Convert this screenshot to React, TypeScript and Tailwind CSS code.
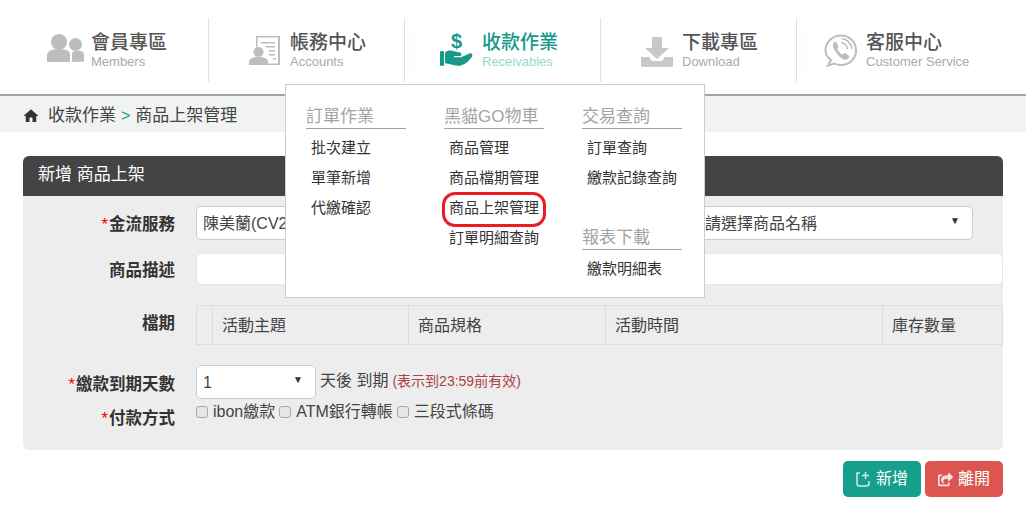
import { FaShareSquare } from "react-icons/fa";
import { MdHome } from "react-icons/md";

const cjk = "font-['Liberation_Sans','Noto_Sans_CJK_TC',sans-serif]";

const MembersIcon = () => (
  <svg width="37" height="30" viewBox="0 0 37 30" fill="#bdbdbd">
    <circle cx="12" cy="9" r="8" />
    <path d="M0 29v-6c0-4 3-6 7-6.500h10c4 .5 5.500 2 6 4v8.500z" />
    <circle cx="28.500" cy="11.500" r="6.500" />
    <path d="M25 29v-9c1-1.500 2-2 4-2h4c2.500 0 4 1.500 4 4v6.500z" />
  </svg>
);

const AccountsIcon = () => (
  <svg width="32" height="31" viewBox="0 0 32 31" fill="#bdbdbd">
    <path d="M7 1h24v29H14v-1.500h15V2.500H8.500V12H7z" />
    <path d="M12 7h14v1.500H12zM17 11h9v1.500h-9zM20 15h6v1.500h-6zM20 19h6v1.500h-6zM24 23h3v1.500h-3z" />
    <circle cx="9.500" cy="17" r="5" />
    <path d="M0 30v-3c0-3 3-4 6-5h7c3 1 6 2 6 5v3z" />
  </svg>
);

const ReceivablesIcon = () => (
  <svg width="33" height="17" viewBox="0 2 33 14" fill="#159a8a" preserveAspectRatio="none">
    <path d="M0 3h4v12H0z" />
    <path d="M5 4c3-2 6-2 9-1l6 1c2 .5 2 3-.5 3H14v1h7l8-3c3-1 4 1 3 2.500C29 11 24 15 18 15c-5 0-9-2-13-2z" />
  </svg>
);

const DownloadIcon = () => (
  <svg width="32" height="32" viewBox="0 0 32 32" fill="#c8c8c8">
    <path d="M11 1h10v11h7L16 23 4 12h7z" />
    <path d="M0 21h8l3 4h10l3-4h8v8c0 1.500-1 2-2 2H2c-1 0-2-.5-2-2z" />
  </svg>
);

// bubble with handset and two sound arcs
const ServiceIcon = () => (
  <svg width="33" height="33" viewBox="0 0 33 33" fill="none" stroke="#bdbdbd">
    <path strokeWidth="2" d="M4 31.500l3-5.500C3.500 23.500 1.500 20 1.500 16.500 1.500 8 8.500 1.500 17 1.500S32 8 32 16.500 25 31 17 31c-2.500 0-5-.5-6.500-1.500z" />
    <path fill="#bdbdbd" stroke="none" d="M9.500 9c1-1.500 2.500-1.500 3-.5l2 4c.3.800-.2 1.300-1.200 2.300-.5.500 3.700 6 5.200 5.700 1-.8 1.800-1.800 2.600-1.500l3.600 2.500c1 .8.200 2.500-1.200 3.500-2 1.500-5.500.5-9-3.500S7.500 12 9.500 9z" />
    <path strokeWidth="1.500" d="M17 8.500c3.500.5 6 3 6.500 6.500M17.500 4.500c5.500.5 10 5 10.500 10.500" />
  </svg>
);

const NewIcon = () => (
  <svg width="15" height="16" viewBox="0 0 15 16" fill="none" stroke="#ffffff" strokeWidth="1.500" className="opacity-80">
    <path d="M4 2H1v10.500C1 14 2 15 3.500 15h7c1.500 0 2.500-1 2.500-2.500V10" />
    <path d="M9.500 1v7M6 4.500h7" />
  </svg>
);

const navItems = [
  { title: "會員專區", sub: "Members", icon: <MembersIcon />, pad: "pl-[34px]", gap: "gap-[7px]", top: "pt-[15px]" },
  { title: "帳務中心", sub: "Accounts", icon: <AccountsIcon />, pad: "pl-[40px]", gap: "gap-[9px]", top: "pt-[17px]" },
  { title: "收款作業", sub: "Receivables", pad: "pl-[35px]", gap: "gap-[9px]", top: "pt-[13px]", active: true,
    icon: (
      <div className="flex flex-col items-center">
        <span className="-mb-px font-['Liberation_Sans',sans-serif] text-[20px] leading-[20px] font-bold text-[#159a8a]">$</span>
        <ReceivablesIcon />
      </div>
    ) },
  { title: "下載專區", sub: "Download", icon: <DownloadIcon />, pad: "pl-[40px]", gap: "gap-[9px]", top: "pt-[18px]" },
  { title: "客服中心", sub: "Customer Service", icon: <ServiceIcon />, pad: "pl-[27px]", gap: "gap-[9px]", top: "pt-[16px]" },
];

const menuCols = [
  { w: "w-[138px]", groups: [{ title: "訂單作業", items: ["批次建立", "單筆新增", "代繳確認"] }] },
  { w: "w-[138px]", groups: [{ title: "黑貓GO物車", items: ["商品管理", "商品檔期管理", "商品上架管理", "訂單明細查詢"] }] },
  { w: "w-[100px]", groups: [
    { title: "交易查詢", items: ["訂單查詢", "繳款記錄查詢"] },
    { title: "報表下載", items: ["繳款明細表"] },
  ] },
];

const Caret = () => <span className="absolute right-[12px] top-[9px] text-[10px] leading-[10px] text-[#333]">▼</span>;

const Label = ({ text, req, cls }: { text: string; req?: boolean; cls?: string }) => (
  <div className={`w-[152px] text-right text-[16.500px] font-bold text-[#333] ${cls ?? ""}`}>
    {req && <span className="mr-[1px] font-normal text-[#ee0000]">*</span>}
    {text}
  </div>
);

const selectBox = "relative h-[34px] rounded-[5px] border border-[#cccccc] bg-white px-[6px] text-[16px] leading-[33px] text-[#444]";

export default function App() {
  return (
    <div className={`relative h-[507px] w-[1026px] overflow-hidden bg-white ${cjk}`}>
      {/* top nav */}
      <div className="flex h-[94px] items-start pl-[13px] pt-[18px]">
        {navItems.map((n, i) => (
          <div key={n.sub} className="flex h-[64px]">
            <div className={`flex h-full w-[195px] items-start ${n.pad} ${n.gap}`}>
              <div className={n.top}>{n.icon}</div>
              <div className="pt-[13px]">
                <div className={`text-[19px] leading-[24px] font-medium ${n.active ? "text-[#159a8a]" : "text-[#555]"}`}>{n.title}</div>
                <div className={`text-[13px] leading-[13px] ${n.active ? "text-[#8fdccb]" : "text-[#aaa]"}`}>{n.sub}</div>
              </div>
            </div>
            {i < 4 && <div className="h-full w-px bg-[#e0e0e0] shadow-[5px_0_7px_0_rgba(0,0,0,0.07)]" />}
          </div>
        ))}
      </div>

      {/* breadcrumb */}
      <div className="flex h-[38px] items-center border-t-2 border-[#a3a3a3] bg-[#f1f3f3] pl-[22px] pt-[3px] text-[17px] text-[#444]">
        <MdHome size={18} color="#333" className="mr-[8px]" />
        <span>收款作業</span>
        <span className="mx-[5px] text-[16px] text-[#159a8a]">&gt;</span>
        <span>商品上架管理</span>
      </div>

      {/* panel */}
      <div className="mx-[23px] mt-[24px] h-[294px] rounded-[6px] bg-[#ededed]">
        <div className="h-[40px] rounded-t-[6px] bg-[#444444] pl-[15px] text-[17px] leading-[37px] text-white">新增 商品上架</div>
        <div className="pt-[10px]">
          <div className="flex items-center gap-[21px]">
            <Label text="金流服務" req cls="pt-[3px]" />
            <div className={`${selectBox} w-[500px] overflow-hidden`}>陳美蘭(CV2</div>
            <div className={`${selectBox} -ml-[20px] w-[276px] pl-[7px]`}>請選擇商品名稱<Caret /></div>
          </div>
          <div className="mt-[13px] flex items-center gap-[21px]">
            <Label text="商品描述" cls="pt-[3px]" />
            <div className="h-[32px] w-[807px] rounded-[5px] border border-[#e6e6e6] bg-white" />
          </div>
          <div className="mt-[20px] flex items-start gap-[21px]">
            <Label text="檔期" cls="pt-[6px]" />
            <div className="flex h-[40px] w-[807px] border border-[#dddddd] text-[16px] leading-[39px] text-[#444]">
              <div className="w-[16px] border-r border-[#dddddd]" />
              <div className="w-[196px] border-r border-[#dddddd] pl-[9px]">活動主題</div>
              <div className="w-[197px] border-r border-[#dddddd] pl-[9px]">商品規格</div>
              <div className="w-[277px] border-r border-[#dddddd] pl-[9px]">活動時間</div>
              <div className="flex-1 pl-[9px]">庫存數量</div>
            </div>
          </div>
          <div className="mt-[20px] flex items-start gap-[21px]">
            <Label text="繳款到期天數" req cls="pt-[7px]" />
            <div className={`${selectBox} w-[120px]`}>1<Caret /></div>
            <div className="-ml-[17px] flex h-[32px] items-center text-[16px] text-[#444]">
              <span>天後 到期</span>
              <span className="ml-[4px] text-[14px] text-[#a94442]">(表示到23:59前有效)</span>
            </div>
          </div>
          <div className="flex items-start gap-[21px]">
            <Label text="付款方式" req cls="pt-[7px]" />
            <div className="flex items-center gap-[4px] pt-[1px] text-[16px] leading-[24px] text-[#444]">
              {["ibon繳款", "ATM銀行轉帳", "三段式條碼"].map(c => (
                <label key={c} className="flex items-center gap-[5px]">
                  <span className="h-[12px] w-[12px] rounded-[3px] border border-[#a8a8a8] bg-[#e6e6e6]" />
                  {c}
                </label>
              ))}
            </div>
          </div>
        </div>
      </div>

      {/* actions */}
      <div className="mr-[23px] mt-[11px] flex justify-end gap-[4px]">
        <button className="flex h-[36px] w-[78px] items-center justify-center gap-[5px] rounded-[5px] bg-[#159f8c] text-[16px] text-white">
          <NewIcon />新增
        </button>
        <button className="flex h-[36px] w-[78px] items-center justify-center gap-[5px] rounded-[5px] bg-[#dc5550] text-[16px] text-white">
          <FaShareSquare size={15} className="opacity-80" />離開
        </button>
      </div>

      {/* dropdown over the page */}
      <div className="absolute left-[285px] top-[84px] z-10 flex h-[214px] w-[420px] border border-[#cccccc] bg-white pl-[20px] pt-[20px]">
        {menuCols.map((col, i) => (
          <div key={i} className={col.w}>
            {col.groups.map((g, j) => (
              <div key={g.title} className={j > 0 ? "mt-[33px]" : ""}>
                <div className="w-[100px] whitespace-nowrap border-b border-[#a3a3a3] text-[17px] leading-[23px] text-[#a3a3a3]">{g.title}</div>
                <div className="pt-[4px]">
                  {g.items.map(it => (
                    <div key={it} className="whitespace-nowrap pl-[5px] text-[15px] leading-[30px] text-[#333]">{it}</div>
                  ))}
                </div>
              </div>
            ))}
          </div>
        ))}
        {/* red highlight on the current item */}
        <div className="absolute left-[156px] top-[107px] h-[35px] w-[104px] rounded-[13px] border-[3px] border-[#ed1c24]" />
      </div>
    </div>
  );
}
